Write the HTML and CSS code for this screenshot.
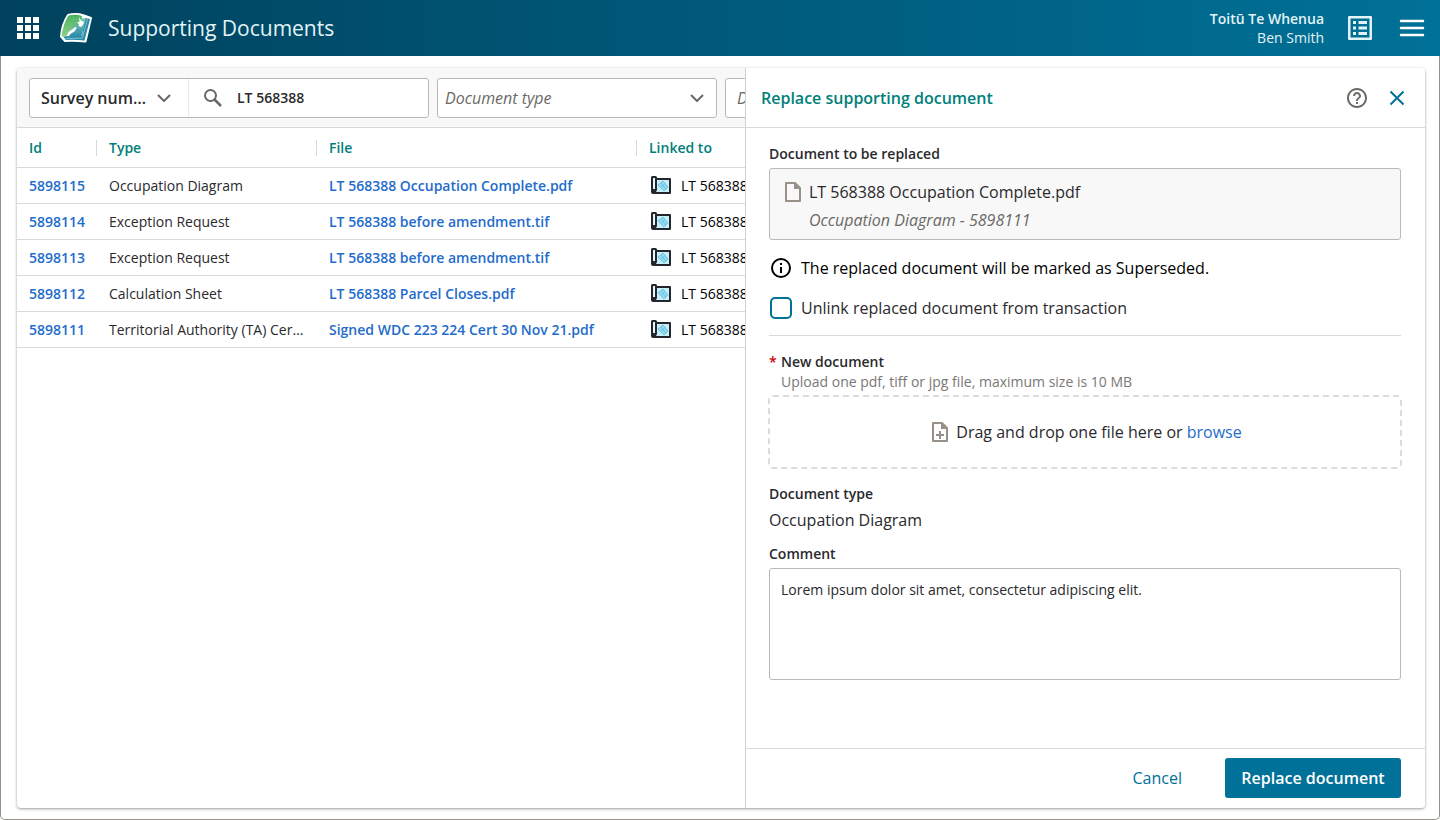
FILE: index.html
```html
<!DOCTYPE html>
<html lang="en">
<head>
  <meta charset="UTF-8" />
  <meta name="viewport" content="width=device-width, initial-scale=1.0" />
  <title>Supporting Documents</title>
  <link rel="stylesheet" href="styles.css">
</head>
<body>
  <svg class="sprite" aria-hidden="true">
    <symbol id="icon-survey" viewBox="0 0 24 24">
      <path d="M3.500 2h3A1.500 1.500 0 0 1 8 3.500V4h13a1 1 0 0 1 1 1v14a1 1 0 0 1-1 1H4a2 2 0 0 1-2-2V3.500A1.500 1.500 0 0 1 3.500 2z" fill="#23262b"/>
      <path d="M8 6h12v12H7l1-2z" fill="#c8eef9"/>
      <path d="M4 4h2v11H4z" fill="#e3f7fd"/>
      <path d="M9 11l5-4 5 6-4 4-3-3z" fill="#98dbf1"/>
      <path d="M9 11l5-4 5 6-4 4zM12 9l5 6M16 9.500l-4 4" stroke="#68c6e4" stroke-width="1" fill="none"/>
    </symbol>
  </svg>

  <header class="app-header">
    <button class="icon-button" aria-label="Applications">
      <svg width="24" height="24" viewBox="0 0 24 24" fill="#fff">
        <path d="M1 1h6v6H1zM9 1h6v6H9zM17 1h6v6h-6zM1 9h6v6H1zM9 9h6v6H9zM17 9h6v6h-6zM1 17h6v6H1zM9 17h6v6H9zM17 17h6v6h-6z"/>
      </svg>
    </button>
    <svg class="logo" width="34" height="32" viewBox="0 0 34 32">
      <defs>
        <linearGradient id="green" x1="0" y1="0" x2="0" y2="1">
          <stop offset="0" stop-color="#43b05c"/>
          <stop offset="1" stop-color="#8fd080"/>
        </linearGradient>
        <linearGradient id="blue" x1="0" y1="0" x2="0" y2="1">
          <stop offset="0" stop-color="#86d0b0"/>
          <stop offset="1" stop-color="#2789a9"/>
        </linearGradient>
      </defs>
      <path d="M9 3Q17 1 25 3.500L32 6 26.500 29.500Q16 28.500 6 29L2 24.500Q3 12 9 3z" fill="#fff" stroke="#fff" stroke-width="2" stroke-linejoin="round"/>
      <path d="M26 6l5 1-5.500 21.500Q15 27.500 7 28l-3-3.500 19-1z" fill="#2789a9"/>
      <path d="M28.500 7l-5 19-17 .5" stroke="#8fcfd8" stroke-width=".8" fill="none"/>
      <path d="M20 5l7 2-5 18-15-.5z" fill="url(#blue)"/>
      <path d="M9.500 3.500Q17 2 23 4l-1.500 6-8 5L7 24.500H2.500Q4 12 9.500 3.500z" fill="url(#green)"/>
      <path d="M8 7h13M6 11h13M5 15h9M4 19h6M11 4L7 21M15 4l-4 11M19 4l-3 8" stroke="#7ccb88" stroke-width=".4" fill="none"/>
      <path d="M20 5l2 3.500L25 10l-1 3-2 2-2.500-1 .5-2-2-1.500 2.500-1zM16 15l2 .5-2.500 4-3.500 2-2 2.500H7.500l2-4z" fill="#fff"/>
    </svg>
    <h1 class="app-title">Supporting Documents</h1>
    <div class="user">
      <div class="user-org">Toitū Te Whenua</div>
      <div class="user-name">Ben Smith</div>
    </div>
    <button class="icon-button" aria-label="Tasks">
      <svg width="26" height="26" viewBox="0 0 26 26" fill="#e2f3f7">
        <path fill-rule="evenodd" d="M2 1h22a1 1 0 0 1 1 1v22a1 1 0 0 1-1 1H2a1 1 0 0 1-1-1V2a1 1 0 0 1 1-1zm1.500 2.500v19h19v-19z"/>
        <path d="M6 6h3v3H6zM6 11.500h3v3H6zM6 17h3v3H6zM11.500 6H20v3h-8.500zM11.500 11.500H20v3h-8.500zM11.500 17H20v3h-8.500z"/>
      </svg>
    </button>
    <button class="icon-button" aria-label="Menu">
      <svg width="26" height="26" viewBox="0 0 26 26">
        <path d="M2 6h22M2 13h22M2 20h22" stroke="#fff" stroke-width="2.500" stroke-linecap="round"/>
      </svg>
    </button>
  </header>

  <main class="page">
    <section class="card">
      <form class="toolbar">
        <div class="search">
          <div class="select-wrap search-by">
            <select class="select select-strong" aria-label="Search by">
              <option>Survey number</option>
            </select>
            <svg class="chevron" width="14" height="8" viewBox="0 0 14 8"><path d="M1 1l6 6 6-6" fill="none" stroke="#6b6966" stroke-width="2"/></svg>
          </div>
          <label class="search-field">
            <svg width="20" height="20" viewBox="0 0 20 20" fill="none" stroke="#6b6966" stroke-width="2">
              <circle cx="7.500" cy="7.500" r="5.500"/>
              <path d="M11.500 11.500l6.500 6.500" stroke-width="2.500"/>
            </svg>
            <input class="search-input" type="text" value="LT 568388" aria-label="Search">
          </label>
        </div>
        <div class="select-wrap filter">
          <select class="select select-placeholder" aria-label="Document type">
            <option>Document type</option>
          </select>
          <svg class="chevron" width="14" height="8" viewBox="0 0 14 8"><path d="M1 1l6 6 6-6" fill="none" stroke="#6b6966" stroke-width="2"/></svg>
        </div>
        <input class="filter date" type="text" placeholder="Date" aria-label="Date">
      </form>

      <table class="documents">
        <colgroup>
          <col class="col-id">
          <col class="col-type">
          <col class="col-file">
          <col>
        </colgroup>
        <thead>
          <tr><th>Id</th><th>Type</th><th>File</th><th>Linked to</th></tr>
        </thead>
        <tbody>
          <tr>
            <td><a href="#">5898115</a></td>
            <td>Occupation Diagram</td>
            <td><a href="#">LT 568388 Occupation Complete.pdf</a></td>
            <td><div class="linked"><svg width="24" height="24"><use href="#icon-survey"/></svg>LT 568388</div></td>
          </tr>
          <tr>
            <td><a href="#">5898114</a></td>
            <td>Exception Request</td>
            <td><a href="#">LT 568388 before amendment.tif</a></td>
            <td><div class="linked"><svg width="24" height="24"><use href="#icon-survey"/></svg>LT 568388</div></td>
          </tr>
          <tr>
            <td><a href="#">5898113</a></td>
            <td>Exception Request</td>
            <td><a href="#">LT 568388 before amendment.tif</a></td>
            <td><div class="linked"><svg width="24" height="24"><use href="#icon-survey"/></svg>LT 568388</div></td>
          </tr>
          <tr>
            <td><a href="#">5898112</a></td>
            <td>Calculation Sheet</td>
            <td><a href="#">LT 568388 Parcel Closes.pdf</a></td>
            <td><div class="linked"><svg width="24" height="24"><use href="#icon-survey"/></svg>LT 568388</div></td>
          </tr>
          <tr>
            <td><a href="#">5898111</a></td>
            <td>Territorial Authority (TA) Certificate</td>
            <td><a href="#">Signed WDC 223 224 Cert 30 Nov 21.pdf</a></td>
            <td><div class="linked"><svg width="24" height="24"><use href="#icon-survey"/></svg>LT 568388</div></td>
          </tr>
        </tbody>
      </table>

      <!-- side panel, slides over the table -->
      <aside class="panel">
        <div class="panel-header">
          <h2 class="panel-title">Replace supporting document</h2>
          <button class="icon-button" aria-label="Help">
            <svg width="24" height="24" viewBox="0 0 24 24" fill="#6b6966">
              <path d="M11 18h2v-2h-2v2zm1-16C6.480 2 2 6.480 2 12s4.480 10 10 10 10-4.480 10-10S17.520 2 12 2zm0 18c-4.410 0-8-3.590-8-8s3.590-8 8-8 8 3.590 8 8-3.590 8-8 8zm0-14c-2.210 0-4 1.790-4 4h2c0-1.100.9-2 2-2s2 .9 2 2c0 2-3 1.750-3 5h2c0-2.250 3-2.500 3-5 0-2.210-1.790-4-4-4z"/>
            </svg>
          </button>
          <button class="icon-button" aria-label="Close">
            <svg width="24" height="24" viewBox="0 0 24 24"><path d="M5.500 5.500l13 13M18.500 5.500l-13 13" stroke="#007198" stroke-width="2"/></svg>
          </button>
        </div>

        <div class="panel-body">
          <div class="label">Document to be replaced</div>
          <div class="current-file">
            <svg width="24" height="24" viewBox="0 0 24 24">
              <path d="M5 3h9l5 5v13H5z" fill="none" stroke="#989189" stroke-width="2" stroke-linejoin="round"/>
              <path d="M13 2.500V9h6.500z" fill="#989189"/>
            </svg>
            <div>
              <div class="file-name">LT 568388 Occupation Complete.pdf</div>
              <div class="file-detail">Occupation Diagram - 5898111</div>
            </div>
          </div>
          <div class="notice">
            <svg width="24" height="24" viewBox="0 0 24 24" fill="#000">
              <circle cx="12" cy="12" r="9" fill="none" stroke="#000" stroke-width="2"/>
              <path d="M11 7h2v2h-2zM11 11h2v6h-2z"/>
            </svg>
            The replaced document will be marked as Superseded.
          </div>
          <label class="check">
            <input class="checkbox" type="checkbox">
            Unlink replaced document from transaction
          </label>
          <hr class="divider">

          <label class="label required" for="upload">New document</label>
          <div class="hint">Upload one pdf, tiff or jpg file, maximum size is 10 MB</div>
          <div class="dropzone">
            <svg width="24" height="24" viewBox="0 0 24 24">
              <path d="M5 3h9l5 5v13H5z" fill="none" stroke="#989189" stroke-width="2" stroke-linejoin="round"/>
              <path d="M13 2.500V9h6.500z" fill="#989189"/>
              <path d="M12 11v8M8 15h8" stroke="#989189" stroke-width="2"/>
            </svg>
            <span>Drag and drop one file here or <a href="#" id="upload">browse</a></span>
          </div>

          <div class="label">Document type</div>
          <div class="value">Occupation Diagram</div>

          <label class="label" for="comment">Comment</label>
          <textarea class="comment" id="comment">Lorem ipsum dolor sit amet, consectetur adipiscing elit.</textarea>
        </div>

        <div class="panel-footer">
          <button class="button">Cancel</button>
          <button class="button button-primary">Replace document</button>
        </div>
      </aside>
    </section>
  </main>
</body>
</html>
```
FILE: styles.css
```css
* {
  box-sizing: border-box;
}
body {
  margin: 0;
  min-height: 100vh;
  display: flex;
  flex-direction: column;
  font-family: "Open Sans", "Noto Sans", sans-serif;
  font-size: 16px;
  line-height: 24px;
  color: #2a292c;
  background: #fff;
}
button,
input,
select,
textarea {
  font: inherit;
  color: inherit;
}
svg {
  display: block;
  flex: none;
}
a {
  color: #1e6ccb;
  text-decoration: none;
}
h1,
h2 {
  margin: 0;
}
.sprite {
  position: absolute;
  width: 0;
  height: 0;
}
.icon-button {
  display: flex;
  padding: 0;
  border: 0;
  background: none;
  cursor: pointer;
}

/* header */
.app-header {
  display: flex;
  align-items: center;
  height: 56px;
  padding: 0 15px 0 16px;
  background: linear-gradient(90deg, #00425d, #007198);
}
.logo {
  margin: 0 15px 0 19px;
}
.app-title {
  flex: 1;
  font-size: 21px;
  font-weight: 400;
  color: #e2f3f7;
}
.user {
  margin-right: 23px;
  font-size: 14px;
  line-height: 19px;
  text-align: right;
  color: #e2f3f7;
}
.user-org {
  font-weight: 600;
}
.app-header .icon-button + .icon-button {
  margin-left: 26px;
}

/* page */
.page {
  flex: 1;
  display: flex;
  padding: 12px 14px 11px 16px;
  border: 1px solid #989189;
  border-top: 0;
  border-radius: 0 0 5px 5px;
}
.card {
  flex: 1;
  position: relative;
  min-width: 0;
  overflow: hidden;
  border-radius: 4px;
  box-shadow: 0 1px 3px rgba(0, 0, 0, 0.4);
}
.toolbar {
  display: flex;
  gap: 8px;
  height: 60px;
  padding: 10px 12px 9px;
  border-bottom: 1px solid #d9d9d9;
  background: #f8f8f8;
}
.search,
.filter {
  height: 40px;
  border: 1px solid #beb8b2;
  border-radius: 3px;
  background: #fff;
}
.search {
  display: flex;
  width: 400px;
}
.select-wrap {
  display: grid;
  align-items: center;
}
.select-wrap > * {
  grid-area: 1 / 1;
}
.search-by {
  width: 161px;
  border-right: 1px solid #eaeaea;
}
.select {
  width: 100%;
  height: 38px;
  padding: 0 40px 0 7px;
  border: 0;
  background: none;
  appearance: none;
  text-overflow: ellipsis;
}
.select-strong {
  padding-left: 11px;
  font-weight: 600;
}
.select-placeholder {
  font-style: italic;
  color: #6b6966;
}
.chevron {
  justify-self: end;
  margin-right: 12px;
  pointer-events: none;
}
.search-by .chevron {
  margin-right: 17px;
}
.search-field {
  flex: 1;
  display: flex;
  align-items: center;
  gap: 14px;
  padding: 0 14px;
}
.search-input {
  flex: 1;
  min-width: 0;
  padding: 0;
  border: 0;
  outline: 0;
  font-size: 14px;
  font-weight: 600;
}
.filter {
  width: 280px;
}
.date {
  padding: 0 11px;
}
.date::placeholder {
  font-style: italic;
  color: #6b6966;
}

/* table */
.documents {
  width: 100%;
  table-layout: fixed;
  border-collapse: separate;
  border-spacing: 0;
  font-size: 14px;
  line-height: 20px;
}
.col-id {
  width: 80px;
}
.col-type {
  width: 220px;
}
.col-file {
  width: 320px;
}
.documents th,
.documents td {
  padding: 0 12px;
  border-bottom: 1px solid #d9d9d9;
  text-align: left;
  white-space: nowrap;
  overflow: hidden;
  text-overflow: ellipsis;
}
.documents th {
  height: 40px;
  font-weight: 600;
  color: #00807a;
  background: linear-gradient(#d9d9d9, #d9d9d9) right center / 1px 16px no-repeat;
}
.documents td {
  height: 36px;
}
.documents td:first-child {
  padding-right: 4px;
}
.documents a {
  font-weight: 600;
}
.linked {
  display: flex;
  align-items: center;
  gap: 8px;
  color: #000;
}

/* side panel */
.panel {
  position: absolute;
  top: 0;
  right: 0;
  bottom: 0;
  width: 680px;
  max-width: 100%;
  display: flex;
  flex-direction: column;
  background: #fff;
  box-shadow: inset 1px 0 0 #d0d0d0;
}
.panel-header {
  display: flex;
  align-items: center;
  gap: 16px;
  height: 60px;
  padding: 0 16px;
  border-bottom: 1px solid #d9d9d9;
}
.panel-title {
  flex: 1;
  font-size: 16px;
  font-weight: 600;
  color: #00807a;
}
.panel-body {
  flex: 1;
  padding: 16px 24px;
}
.label {
  display: block;
  font-size: 14px;
  font-weight: 600;
  line-height: 20px;
}
.current-file {
  display: flex;
  gap: 4px;
  height: 72px;
  margin: 4px 0 16px;
  padding: 11px;
  border: 1px solid #beb8b2;
  border-radius: 3px;
  background: #f8f8f8;
}
.file-detail {
  margin-top: 4px;
  font-style: italic;
  color: #6b6966;
}
.notice,
.check {
  display: flex;
  gap: 8px;
}
.notice {
  margin-bottom: 16px;
  color: #000;
}
.checkbox {
  flex: none;
  width: 22px;
  height: 22px;
  margin: 1px;
  border: 2px solid #007198;
  border-radius: 5px;
  background: #fff;
  appearance: none;
}
.checkbox:checked {
  background: #007198;
}
.divider {
  height: 1px;
  margin: 15px 0 16px;
  border: 0;
  background: #d9d9d9;
}
.required::before {
  content: "*";
  display: inline-block;
  width: 12px;
  color: #cc0000;
}
.hint {
  padding-left: 12px;
  font-size: 14px;
  line-height: 20px;
  color: #7a7874;
}
.dropzone {
  display: flex;
  align-items: center;
  justify-content: center;
  gap: 4px;
  height: 74px;
  margin: 3px -1px 15px;
  border: 2px dashed #dcdcdc;
  border-radius: 5px;
}
.value {
  margin: 4px 0 12px;
}
.comment {
  display: block;
  width: 100%;
  height: 112px;
  margin-top: 4px;
  padding: 11px;
  border: 1px solid #beb8b2;
  border-radius: 3px;
  font-size: 14px;
  line-height: 20px;
  resize: none;
}
.panel-footer {
  display: flex;
  justify-content: flex-end;
  gap: 27px;
  height: 60px;
  padding: 9px 24px;
  border-top: 1px solid #d9d9d9;
}
.button {
  height: 40px;
  padding: 0 16px;
  border: 0;
  border-radius: 3px;
  background: none;
  color: #007198;
  cursor: pointer;
}
.button-primary {
  min-width: 176px;
  background: #007198;
  color: #fff;
  font-weight: 600;
}
```
